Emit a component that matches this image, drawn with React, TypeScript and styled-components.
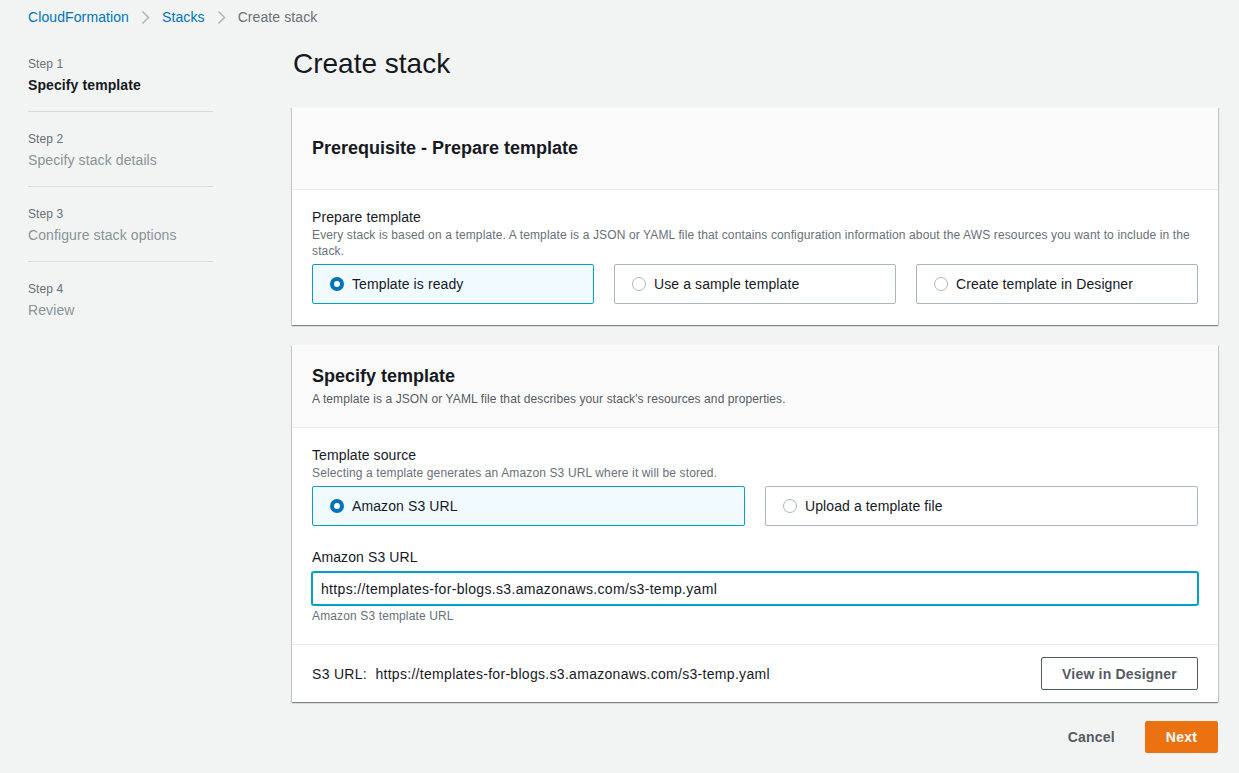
import React from 'react';
import styled, { createGlobalStyle } from 'styled-components';

const GlobalStyle = createGlobalStyle`
  html, body {
    margin: 0;
    padding: 0;
    background: #f2f3f3;
    font-family: "Liberation Sans", Arial, sans-serif;
    color: #16191f;
    letter-spacing: 0.1px;
  }
  * {
    box-sizing: border-box;
  }
`;

const Page = styled.div`
  padding: 7px 21px 40px 28px;
  min-height: 773px;
`;

const Breadcrumbs = styled.nav`
  display: flex;
  align-items: center;
  gap: 12px;
  font-size: 14px;
  line-height: 20px;
`;

const Crumb = styled.span<{ current?: boolean }>`
  color: ${props => (props.current ? '#687078' : '#0073bb')};
`;

const Layout = styled.div`
  display: grid;
  grid-template-columns: 185px 1fr;
  column-gap: 79px;
  margin-top: 19px;
`;

const Steps = styled.ol`
  list-style: none;
  margin: 0;
  padding: 10px 0 0;
`;

const StepItem = styled.li`
  padding-bottom: 16px;
  margin-bottom: 19px;
  border-bottom: 1px solid #d5dbdb;

  &:last-child {
    border-bottom: none;
  }
`;

const StepNumber = styled.div`
  font-size: 12px;
  line-height: 16px;
  color: #687078;
  margin-bottom: 3px;
`;

const StepTitle = styled.div<{ active?: boolean }>`
  font-size: 14px;
  line-height: 20px;
  font-weight: ${props => (props.active ? 700 : 400)};
  color: ${props => (props.active ? '#16191f' : '#879596')};
`;

const Main = styled.main`
  display: flex;
  flex-direction: column;
`;

const Heading = styled.h1`
  margin: 0 0 25px 1px;
  font-size: 28px;
  line-height: 36px;
  font-weight: 400;
  letter-spacing: 0;
  color: #16191f;
`;

const Panel = styled.section`
  background: #ffffff;
  margin-bottom: 20px;
  box-shadow: 0 1px 1px 0 rgba(0, 28, 36, 0.3), 1px 1px 1px 0 rgba(0, 28, 36, 0.15),
    -1px 1px 1px 0 rgba(0, 28, 36, 0.15);
`;

const PanelHeader = styled.header`
  height: 83px;
  display: flex;
  flex-direction: column;
  justify-content: center;
  padding: 0 20px;
  background: #fafafa;
  border-bottom: 1px solid #eaeded;
`;

const PanelTitle = styled.h2`
  margin: 0;
  font-size: 18px;
  line-height: 22px;
  font-weight: 700;
  letter-spacing: 0;
`;

const PanelDescription = styled.p`
  margin: 4px 0 0;
  font-size: 12px;
  line-height: 16px;
  color: #545b64;
`;

const PanelBody = styled.div`
  padding: 17px 20px 20px;
`;

const PanelFooter = styled.div`
  display: flex;
  align-items: center;
  justify-content: space-between;
  padding: 12px 20px;
  border-top: 1px solid #eaeded;
  font-size: 14px;
  line-height: 20px;
`;

const Field = styled.div<{ spaced?: boolean; last?: boolean }>`
  margin-top: ${props => (props.spaced ? '21px' : '0')};
  padding-bottom: ${props => (props.last ? '1px' : '0')};
`;

const Label = styled.div`
  font-size: 14px;
  line-height: 20px;
  color: #16191f;
`;

const Hint = styled.div`
  font-size: 12px;
  line-height: 16px;
  color: #687078;
  letter-spacing: 0.13px;
`;

const Tiles = styled.div<{ cols: number }>`
  display: grid;
  grid-template-columns: repeat(${props => props.cols}, 1fr);
  gap: 20px;
  margin-top: 5px;
`;

const Tile = styled.label<{ selected?: boolean }>`
  height: 40px;
  display: flex;
  align-items: center;
  gap: 8px;
  padding: 0 17px;
  font-size: 14px;
  border: 1px solid ${props => (props.selected ? '#00a1c9' : '#aab7b8')};
  background: ${props => (props.selected ? '#f1faff' : '#ffffff')};
  border-radius: 2px;
  cursor: pointer;
`;

const Radio = styled.span<{ checked?: boolean }>`
  width: 14px;
  height: 14px;
  border-radius: 50%;
  flex: none;
  background: #ffffff;
  border: ${props => (props.checked ? '4px solid #0073bb' : '1px solid #aab7b8')};
`;

const Input = styled.input`
  display: block;
  width: 100%;
  height: 33px;
  margin: 5px 0 3px;
  padding: 0 8px;
  font-family: inherit;
  font-size: 14px;
  letter-spacing: 0.33px;
  color: #16191f;
  border: 1px solid #00a1c9;
  box-shadow: 0 0 0 1px #00a1c9;
  border-radius: 2px;
  outline: none;
`;

const UrlText = styled.span`
  color: #16191f;
  letter-spacing: 0.3px;
`;

const Button = styled.button<{ variant?: 'normal' | 'primary' | 'link' }>`
  font-family: inherit;
  font-size: 14px;
  font-weight: 700;
  line-height: 20px;
  letter-spacing: 0.2px;
  border-radius: 2px;
  cursor: pointer;
  height: ${props => (props.variant === 'normal' || !props.variant ? '33px' : '32px')};
  padding: 0 20px;
  border: 1px solid
    ${props =>
      props.variant === 'primary' ? '#ec7211' : props.variant === 'link' ? 'transparent' : '#545b64'};
  background: ${props => (props.variant === 'primary' ? '#ec7211' : props.variant === 'link' ? 'transparent' : '#ffffff')};
  color: ${props => (props.variant === 'primary' ? '#ffffff' : '#545b64')};
`;

const Actions = styled.div`
  display: flex;
  justify-content: flex-end;
  align-items: center;
  gap: 9px;
  margin-top: -1px;
`;

const Chevron = () => (
  <svg width="9" height="15" viewBox="0 0 9 15" fill="none">
    <polyline points="1.5,1.5 7.5,7.5 1.5,13.5" stroke="#aab7b8" strokeWidth="1.5" />
  </svg>
);

const steps = [
  { n: 1, title: 'Specify template' },
  { n: 2, title: 'Specify stack details' },
  { n: 3, title: 'Configure stack options' },
  { n: 4, title: 'Review' },
];

const url = 'https://templates-for-blogs.s3.amazonaws.com/s3-temp.yaml';

const App = () => {
  return (
    <Page>
      <GlobalStyle />
      <Breadcrumbs>
        <Crumb>CloudFormation</Crumb>
        <Chevron />
        <Crumb>Stacks</Crumb>
        <Chevron />
        <Crumb current>Create stack</Crumb>
      </Breadcrumbs>
      <Layout>
        <Steps>
          {steps.map(step => (
            <StepItem key={step.n}>
              <StepNumber>Step {step.n}</StepNumber>
              <StepTitle active={step.n === 1}>{step.title}</StepTitle>
            </StepItem>
          ))}
        </Steps>
        <Main>
          <Heading>Create stack</Heading>
          <Panel>
            <PanelHeader>
              <PanelTitle>Prerequisite - Prepare template</PanelTitle>
            </PanelHeader>
            <PanelBody>
              <Field last>
                <Label>Prepare template</Label>
                <Hint>
                  Every stack is based on a template. A template is a JSON or YAML file that contains configuration
                  information about the AWS resources you want to include in the stack.
                </Hint>
                <Tiles cols={3}>
                  <Tile selected>
                    <Radio checked />
                    Template is ready
                  </Tile>
                  <Tile>
                    <Radio />
                    Use a sample template
                  </Tile>
                  <Tile>
                    <Radio />
                    Create template in Designer
                  </Tile>
                </Tiles>
              </Field>
            </PanelBody>
          </Panel>
          <Panel>
            <PanelHeader>
              <PanelTitle>Specify template</PanelTitle>
              <PanelDescription>
                A template is a JSON or YAML file that describes your stack's resources and properties.
              </PanelDescription>
            </PanelHeader>
            <PanelBody>
              <Field>
                <Label>Template source</Label>
                <Hint>Selecting a template generates an Amazon S3 URL where it will be stored.</Hint>
                <Tiles cols={2}>
                  <Tile selected>
                    <Radio checked />
                    Amazon S3 URL
                  </Tile>
                  <Tile>
                    <Radio />
                    Upload a template file
                  </Tile>
                </Tiles>
              </Field>
              <Field spaced>
                <Label>Amazon S3 URL</Label>
                <Input defaultValue={url} />
                <Hint>Amazon S3 template URL</Hint>
              </Field>
            </PanelBody>
            <PanelFooter>
              <UrlText>S3 URL:&nbsp;&nbsp;{url}</UrlText>
              <Button>View in Designer</Button>
            </PanelFooter>
          </Panel>
          <Actions>
            <Button variant="link">Cancel</Button>
            <Button variant="primary">Next</Button>
          </Actions>
        </Main>
      </Layout>
    </Page>
  );
};

export default App;
